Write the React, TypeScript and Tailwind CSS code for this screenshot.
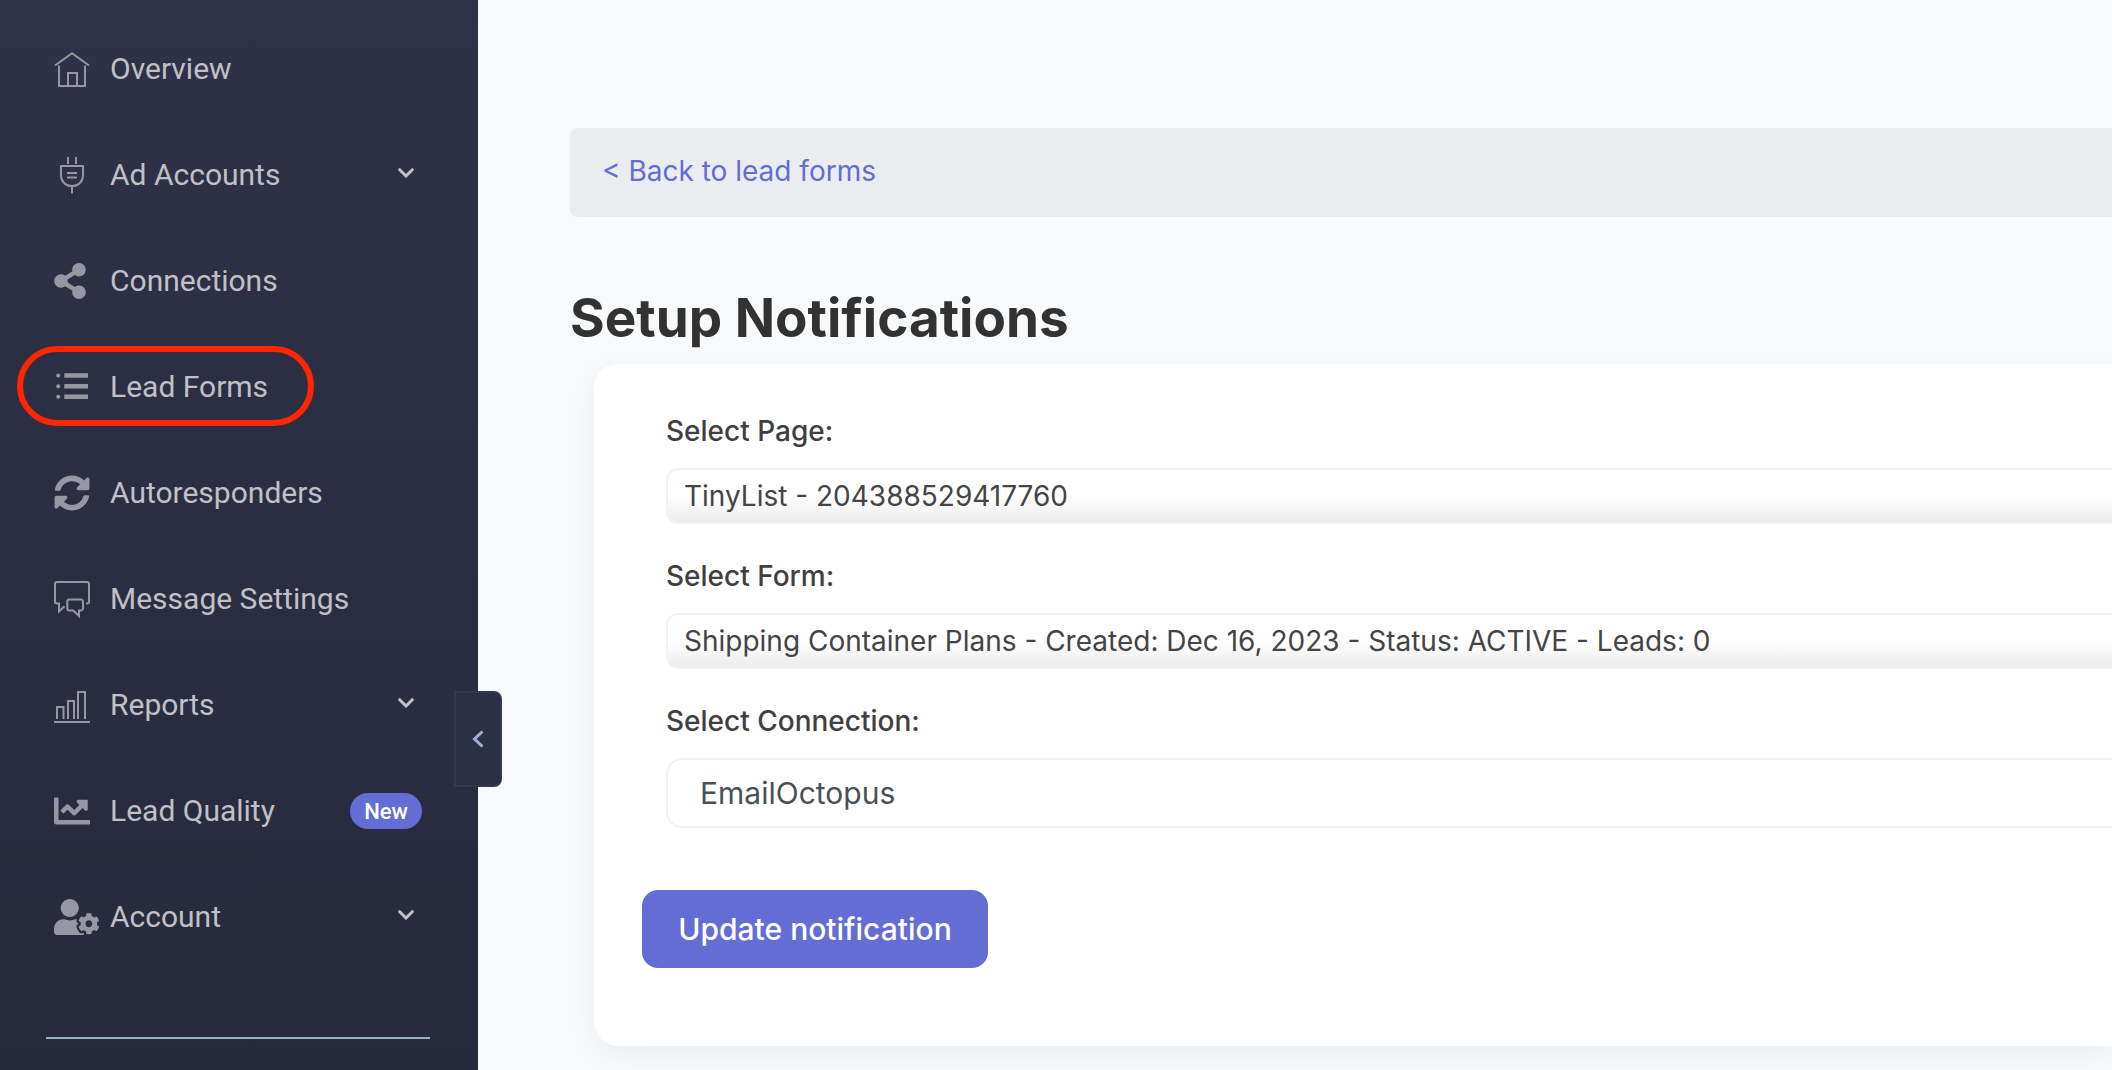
import { useState } from "react";
import type { ReactNode } from "react";
import { FaChartLine, FaShareAlt, FaSyncAlt, FaUserCog } from "react-icons/fa";

const HouseIcon = () => (
  <svg width="36" height="36" viewBox="0 0 36 36" fill="none" stroke="currentColor" strokeWidth="2">
    <path d="M1 14.5 18 2.2l17 12.3" />
    <path d="M5 14.5V35h26V14.5" />
    <path d="M14 35V22h9v13" />
  </svg>
);

const PlugIcon = () => (
  <svg width="36" height="36" viewBox="0 0 36 36" className="overflow-visible" fill="none" stroke="currentColor" strokeWidth="2">
    <path d="M14 0v7M22 0v7M18 29v7.5" />
    <path d="M7 9h22v9.5A10.5 10.5 0 0 1 18.5 29h-1A10.5 10.5 0 0 1 7 18.5z" />
    <path d="M13 16h10M13 20.5h10" />
  </svg>
);

const ListIcon = () => (
  <svg width="36" height="36" viewBox="0 0 36 36" fill="currentColor">
    <circle cx="4.2" cy="6.5" r="2" />
    <circle cx="4.2" cy="17.2" r="2" />
    <circle cx="4.2" cy="27.8" r="2" />
    <path d="M10.3 4.2H34v4.6H10.3zM10.3 15H34v4.6H10.3zM10.3 25.5H34v4.6H10.3z" />
  </svg>
);

const MessageIcon = () => (
  <svg width="36" height="36" viewBox="0 0 36 36" className="overflow-visible" fill="none" stroke="currentColor" strokeWidth="2">
    <path d="M32 22.4h1a2 2 0 0 0 2-2V3a2 2 0 0 0-2-2H3a2 2 0 0 0-2 2v17.4a2 2 0 0 0 2 2h2v8l5.5-5.2" />
    <path d="M15.5 18.5h11.3a2.2 2.2 0 0 1 2.2 2.2v6.6a2.2 2.2 0 0 1-2.2 2.2H25v5.5l-5.8-5.5h-3.7a2.2 2.2 0 0 1-2.2-2.2v-6.6a2.2 2.2 0 0 1 2.2-2.2z" />
  </svg>
);

const BarsIcon = () => (
  <svg width="36" height="36" viewBox="0 0 36 36" className="overflow-visible" fill="none" stroke="currentColor" strokeWidth="2">
    <path d="M3 32V20h6.5v12M14 32V14h6v18M24 32V5h7v27" />
    <path d="M0 35h36" />
  </svg>
);

const ChevronDown = () => (
  <svg width="16" height="10" viewBox="0 0 16 10" fill="none" stroke="currentColor" strokeWidth="3" strokeLinecap="round">
    <path d="m1.7 1.7 6.3 6.3 6.3-6.3" />
  </svg>
);

type NavItem = {
  label: string;
  icon: ReactNode;
  expandable?: boolean;
  badge?: string;
  marked?: boolean;
};

const navItems: NavItem[] = [
  { label: "Overview", icon: <HouseIcon /> },
  { label: "Ad Accounts", icon: <PlugIcon />, expandable: true },
  { label: "Connections", icon: <FaShareAlt className="h-9 w-8" /> },
  { label: "Lead Forms", icon: <ListIcon />, marked: true },
  { label: "Autoresponders", icon: <FaSyncAlt className="size-9" /> },
  { label: "Message Settings", icon: <MessageIcon /> },
  { label: "Reports", icon: <BarsIcon />, expandable: true },
  { label: "Lead Quality", icon: <FaChartLine className="size-9" />, badge: "New" },
  { label: "Account", icon: <FaUserCog className="h-9 w-[45px] shrink-0" />, expandable: true },
];

const Sidebar = () => (
  <aside className="relative w-[478px] shrink-0 bg-linear-to-b from-[#2f3148] to-[#272a3d] pt-4 font-['Roboto',sans-serif]">
    <nav>
      <ul>
        {navItems.map((item) => (
          <li key={item.label} className="relative">
            <a href="#" className="flex h-[106px] items-center pr-14 pl-[54px] text-[30px] text-[#c0c0c6]">
              <span className="flex w-14 shrink-0 items-center text-[#9797a3]">{item.icon}</span>
              <span className="flex-1 pb-0.5">{item.label}</span>
              {item.expandable && (
                <span className="pr-2 pb-1">
                  <ChevronDown />
                </span>
              )}
              {item.badge && (
                <span className="flex h-9 w-[72px] items-center justify-center rounded-full bg-[#636dd3] text-[22px] font-medium text-white">
                  {item.badge}
                </span>
              )}
            </a>
            {item.marked && (
              <span className="pointer-events-none absolute top-3 left-[17px] h-20 w-[297px] rounded-full border-6 border-[#ff2600]" />
            )}
          </li>
        ))}
      </ul>
    </nav>
    <hr className="mt-[67px] mr-12 ml-[46px] border-t-2 border-[#9ab0c8]" />
    <button
      type="button"
      aria-label="Collapse sidebar"
      className="absolute top-[691px] -right-6 flex h-24 w-12 items-center justify-center rounded-r-lg border-2 border-[#343950] bg-[#2b3044] text-[#a3addb]"
    >
      <svg width="12" height="18" viewBox="0 0 12 18" fill="none" stroke="currentColor" strokeWidth="3">
        <path d="m10.5 1.5-8 7.5 8 7.5" />
      </svg>
    </button>
  </aside>
);

type FieldProps = {
  id: string;
  label: string;
  value: string;
  className: string;
};

const SelectField = ({ id, label, value, className }: FieldProps) => {
  const [selected, setSelected] = useState(value);

  return (
    <div className="flex flex-col gap-4">
      <label htmlFor={id} className="text-[28px] leading-[42px] font-medium text-[#404040]">
        {label}
      </label>
      <select
        id={id}
        value={selected}
        onChange={(e) => setSelected(e.target.value)}
        className={`w-full appearance-none border-2 border-r-0 border-[#f2f2f2] ${className}`}
      >
        <option value={value}>{value}</option>
      </select>
    </div>
  );
};

const nativeSelect =
  "h-14 rounded-l-xl bg-linear-to-b from-white from-50% to-[#ececec] pl-4 text-[28px] text-[#444444]";

export default function App() {
  return (
    <div className="flex min-h-screen bg-[#f8f9fb] font-['Inter',sans-serif]">
      <Sidebar />
      <main className="min-w-0 flex-1 pt-32 pb-5 pl-[92px]">
        <div className="flex h-[89px] items-start rounded-l-lg bg-[#ebecf0] px-8 pt-6">
          <a href="#" className="text-[28px] leading-[38px] text-[#636dd3]">
            &lt; Back to lead forms
          </a>
        </div>
        <h1 className="mt-[71px] text-[53px] leading-[60px] font-bold text-[#323232]">
          Setup Notifications
        </h1>
        <form
          onSubmit={(e) => e.preventDefault()}
          className="mt-4 ml-6 rounded-l-3xl bg-white pt-[46px] pb-[78px] pl-[72px] shadow-[0_8px_30px_rgba(0,0,0,0.05)]"
        >
          <div className="flex flex-col gap-[31px]">
            <SelectField
              id="page"
              label="Select Page:"
              value="TinyList - 204388529417760"
              className={nativeSelect}
            />
            <SelectField
              id="form"
              label="Select Form:"
              value="Shipping Container Plans - Created: Dec 16, 2023 - Status: ACTIVE - Leads: 0"
              className={nativeSelect}
            />
            <SelectField
              id="connection"
              label="Select Connection:"
              value="EmailOctopus"
              className="h-[70px] rounded-l-2xl bg-white pl-8 text-[30px] text-[#495057]"
            />
          </div>
          <button
            type="submit"
            className="mt-[62px] -ml-6 h-[78px] w-[346px] rounded-2xl bg-[#636dd3] text-[30px] font-medium text-white"
          >
            Update notification
          </button>
        </form>
      </main>
    </div>
  );
}
